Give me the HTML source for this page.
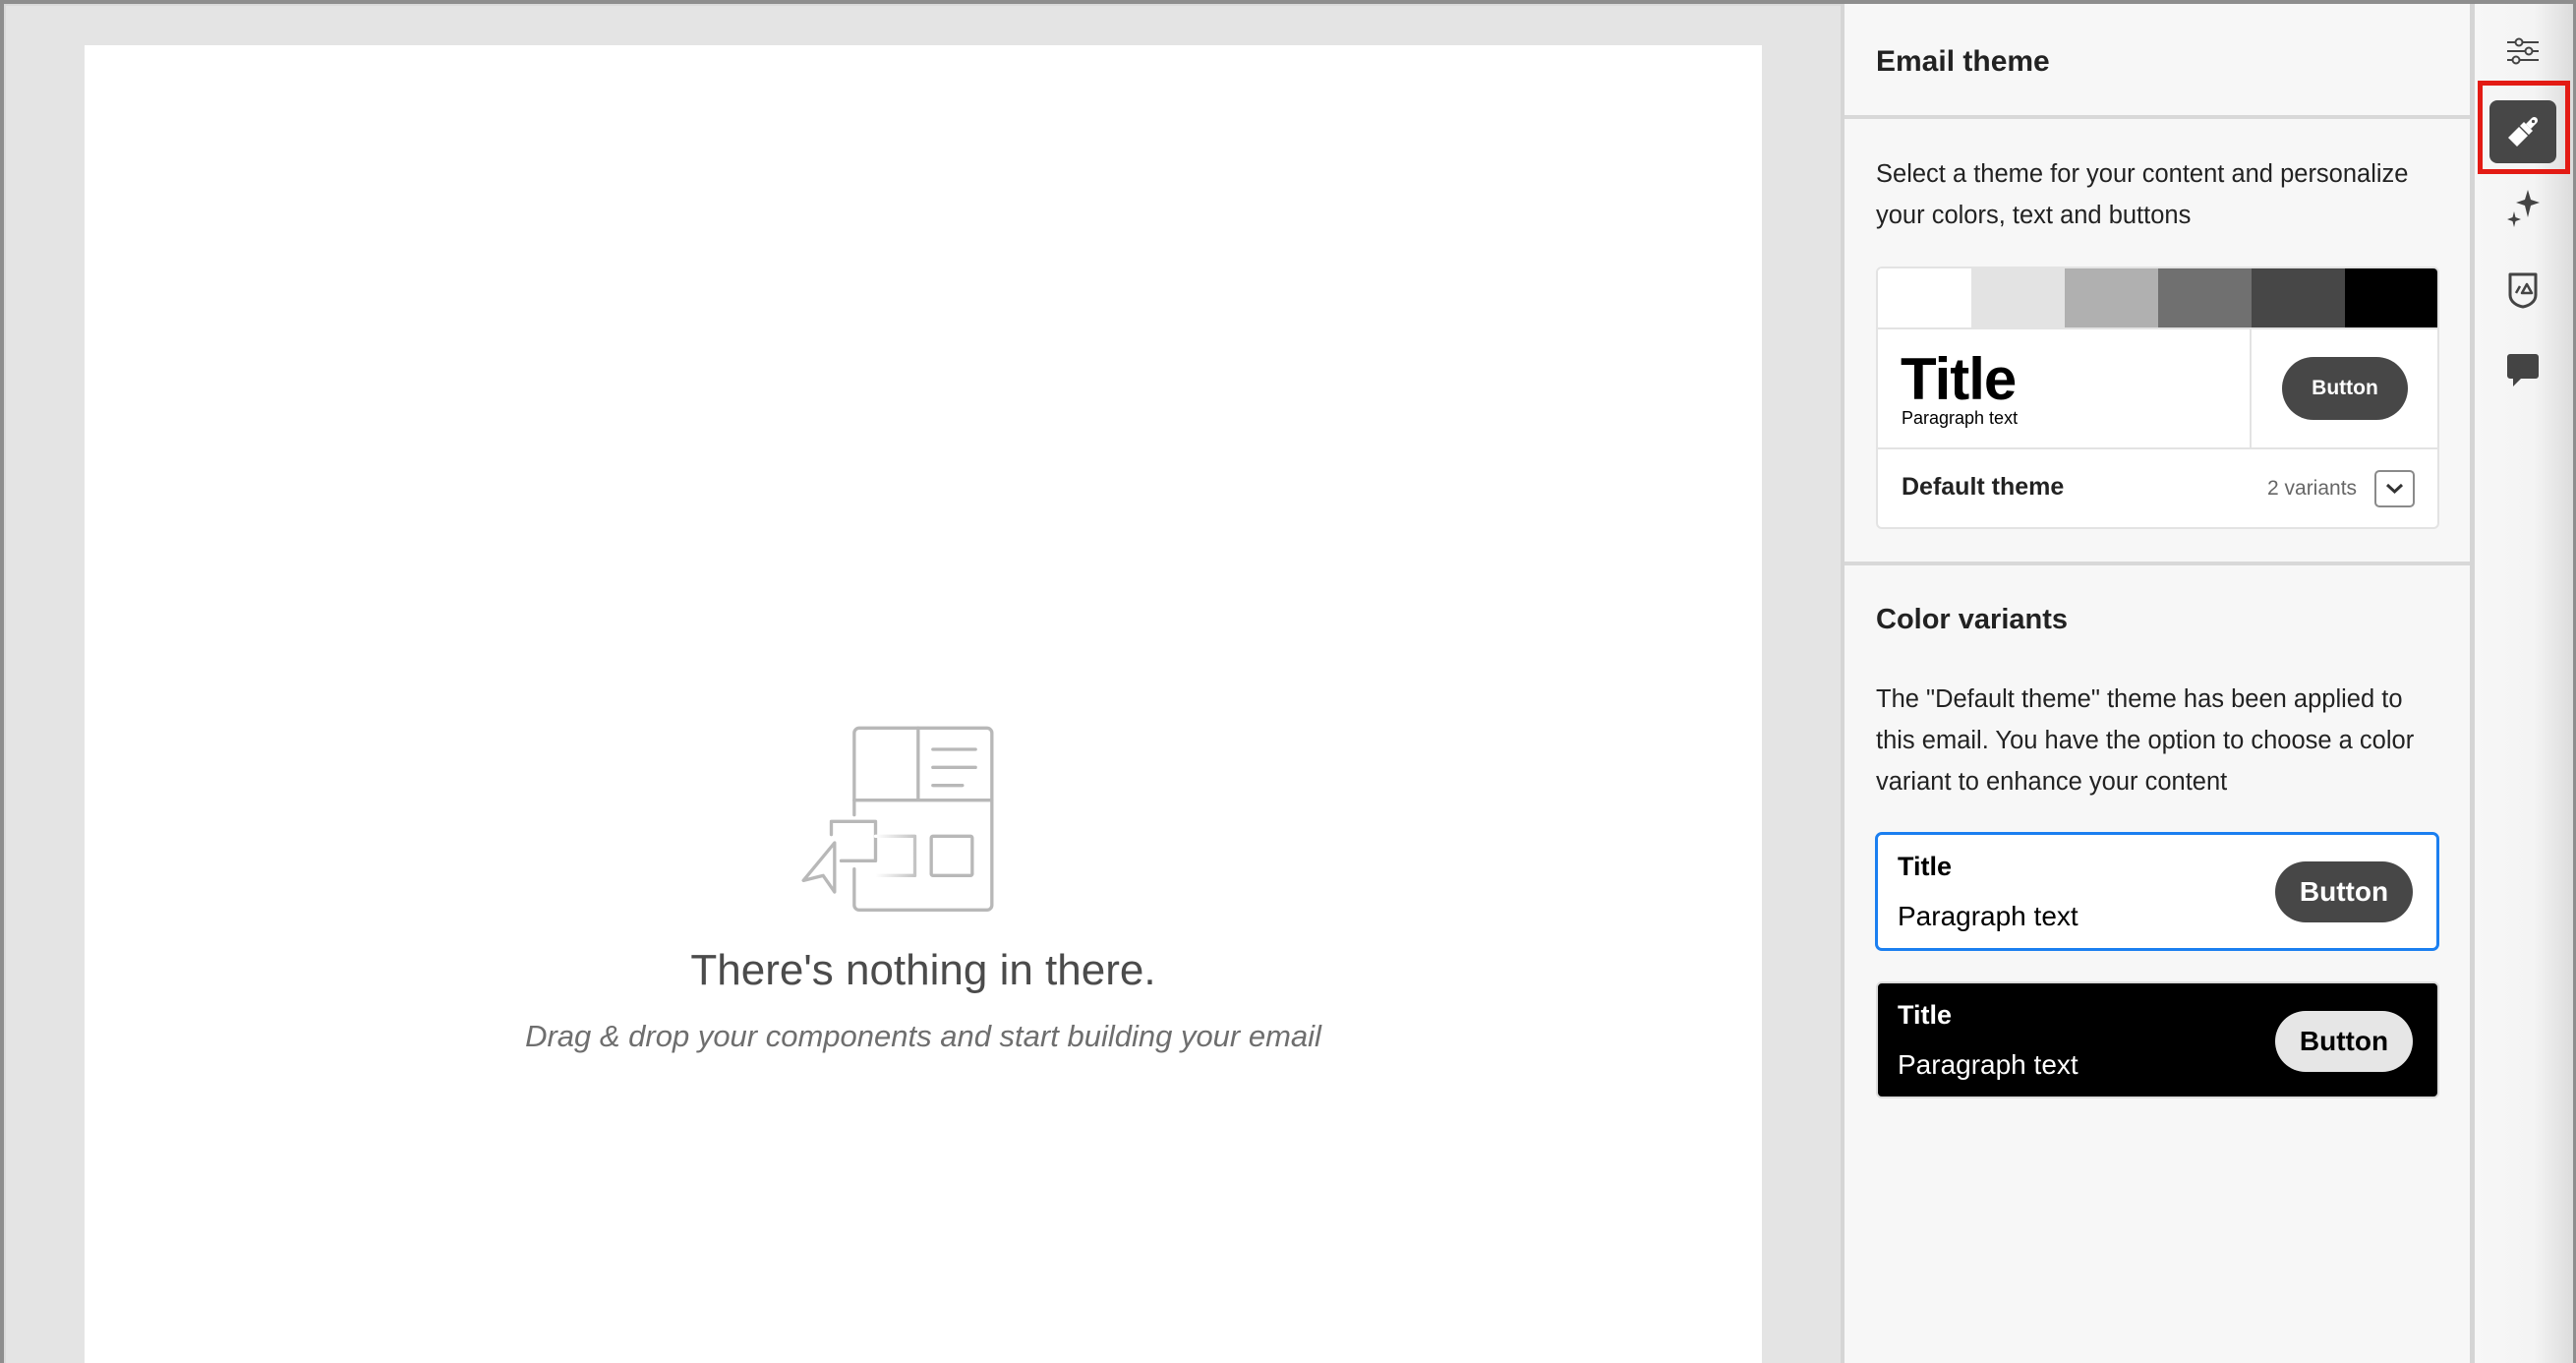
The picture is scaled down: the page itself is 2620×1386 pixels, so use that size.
<!DOCTYPE html>
<html><head><meta charset="utf-8"><style>
*{margin:0;padding:0;box-sizing:border-box}
body{width:2620px;height:1386px;overflow:hidden;position:relative;background:#e4e4e4;font-family:"Liberation Sans",sans-serif;}
.a{position:absolute}
.t{position:absolute;white-space:nowrap}
</style></head><body>
<div class="a" style="left:0;top:0;width:2620px;height:4px;background:#8e8e8e"></div>
<div class="a" style="left:0;top:0;width:4px;height:1386px;background:#8e8e8e"></div>
<div class="a" style="left:2617px;top:0;width:3px;height:1386px;background:#8e8e8e"></div>
<div class="a" style="left:4px;top:4px;width:2px;height:1382px;background:#dadada"></div>
<div class="a" style="left:4px;top:4px;width:1868px;height:2px;background:#dadada"></div>
<div class="a" style="left:86px;top:46px;width:1706px;height:1340px;background:#fff"></div>
<svg class="a" style="left:802px;top:732px" width="217" height="200" viewBox="480 438 130 120">
<defs><linearGradient id="g" x1="0" x2="1"><stop offset="0" stop-color="#fff"/><stop offset="1" stop-color="#c4c4c4"/></linearGradient></defs>
<g fill="none" stroke="#b8b8b8" stroke-width="2" stroke-linecap="round" stroke-linejoin="round">
<path d="M520 496 V446 a3 3 0 0 1 3-3 H601 a3 3 0 0 1 3 3 V551 a3 3 0 0 1-3 3 H523 a3 3 0 0 1-3-3 V529"/>
<path d="M559 443 V487 M520 487 H604"/>
<path d="M568 456 H594 M568 467 H594 M568 478 H586"/>
<path d="M506 508 V500 H533 V524 H512"/>
<rect x="567" y="509" width="25" height="24" rx="1"/>
<path d="M533 509 H557 V533 H533" stroke="url(#g)"/>
<path d="M508 513 L489 536 L501 533 L508 543 Z"/>
</g></svg>
<div class="t" style="left:0;width:1878px;text-align:center;top:962px;font-size:44px;color:#4b4b4b">There's nothing in there.</div>
<div class="t" style="left:0;width:1878px;text-align:center;top:1036px;font-size:31px;color:#6e6e6e;font-style:italic">Drag &amp; drop your components and start building your email</div>
<div class="a" style="left:1872px;top:4px;width:4px;height:1382px;background:#d5d5d5"></div>
<div class="a" style="left:1876px;top:4px;width:636px;height:1382px;background:#f7f7f7"></div>
<div class="a" style="left:1876px;top:117px;width:636px;height:4px;background:#d8d8d8"></div>
<div class="a" style="left:1876px;top:571px;width:636px;height:4px;background:#d8d8d8"></div>
<div class="t" style="left:1908px;top:46px;font-size:30px;font-weight:bold;color:#222">Email theme</div>
<div class="t" style="left:1908px;top:156px;font-size:25.5px;line-height:42px;color:#222">Select a theme for your content and personalize<br>your colors, text and buttons</div>
<div class="a" style="left:1908px;top:271px;width:573px;height:267px;border:2px solid #e3e3e3;border-radius:6px;background:#fff;overflow:hidden">
 <div class="a" style="left:0;top:0;width:95px;height:60px;background:#fff"></div>
 <div class="a" style="left:95px;top:0;width:95px;height:60px;background:#e3e3e3"></div>
 <div class="a" style="left:190px;top:0;width:95px;height:60px;background:#b0b0b0"></div>
 <div class="a" style="left:285px;top:0;width:95px;height:60px;background:#707070"></div>
 <div class="a" style="left:380px;top:0;width:95px;height:60px;background:#474747"></div>
 <div class="a" style="left:475px;top:0;width:100px;height:60px;background:#000"></div>
 <div class="a" style="left:0;top:60px;width:573px;height:2px;background:#e3e3e3"></div>
 <div class="a" style="left:378px;top:60px;width:2px;height:122px;background:#e3e3e3"></div>
 <div class="a" style="left:0;top:182px;width:573px;height:2px;background:#e3e3e3"></div>
 <div class="t" style="left:23px;top:78px;font-size:60px;font-weight:bold;color:#000;letter-spacing:-1px">Title</div>
 <div class="t" style="left:24px;top:142px;font-size:18px;color:#000">Paragraph text</div>
 <div class="a" style="left:411px;top:90px;width:128px;height:64px;border-radius:32px;background:#474747;color:#fff;font-weight:bold;font-size:21px;text-align:center;line-height:64px">Button</div>
 <div class="t" style="left:24px;top:208px;font-size:25px;font-weight:bold;color:#222">Default theme</div>
 <div class="t" style="left:396px;top:212px;font-size:21px;color:#666">2 variants</div>
 <div class="a" style="left:505px;top:205px;width:41px;height:38px;border:2px solid #8a8a8a;border-radius:5px"></div>
 <svg class="a" style="left:515px;top:216px" width="21" height="16" viewBox="0 0 21 16"><path d="M3 4 L10.5 11 L18 4" fill="none" stroke="#333" stroke-width="3"/></svg>
</div>
<div class="t" style="left:1908px;top:614px;font-size:29px;font-weight:bold;color:#222">Color variants</div>
<div class="t" style="left:1908px;top:690px;font-size:25.5px;line-height:42px;color:#222">The "Default theme" theme has been applied to<br>this email. You have the option to choose a color<br>variant to enhance your content</div>
<div class="a" style="left:1907px;top:846px;width:574px;height:121px;border:3px solid #1b7ff0;border-radius:7px;background:#fff">
 <div class="t" style="left:20px;top:17px;font-size:27px;font-weight:bold;color:#000">Title</div>
 <div class="t" style="left:20px;top:67px;font-size:28px;color:#000">Paragraph text</div>
 <div class="a" style="left:404px;top:27px;width:140px;height:62px;border-radius:31px;background:#474747;color:#fff;font-weight:bold;font-size:28px;text-align:center;line-height:62px">Button</div>
</div>
<div class="a" style="left:1908px;top:998px;width:573px;height:119px;border:2px solid #ddd;border-radius:6px;background:#000">
 <div class="t" style="left:20px;top:17px;font-size:27px;font-weight:bold;color:#fff">Title</div>
 <div class="t" style="left:20px;top:67px;font-size:28px;color:#fff">Paragraph text</div>
 <div class="a" style="left:404px;top:28px;width:140px;height:62px;border-radius:31px;background:#e6e6e6;color:#000;font-weight:bold;font-size:28px;text-align:center;line-height:62px">Button</div>
</div>
<div class="a" style="left:2512px;top:4px;width:5px;height:1382px;background:#d5d5d5"></div>
<div class="a" style="left:2517px;top:4px;width:100px;height:1382px;background:linear-gradient(to right,#f7f7f7 0%,#f4f4f4 60%,#dcdcdc 100%)"></div>
<svg class="a" style="left:2548px;top:38px" width="36" height="28" viewBox="0 0 36 28"><g fill="none" stroke="#444" stroke-width="2"><path d="M2 5 H10 M18 5 H34 M2 14 H20 M28 14 H34 M2 23 H7 M15 23 H34"/><circle cx="14" cy="5" r="3.5"/><circle cx="24" cy="14" r="3.5"/><circle cx="11" cy="23" r="3.5"/></g></svg>
<div class="a" style="left:2520px;top:82px;width:94px;height:95px;border:5px solid #e31b14"></div>
<div class="a" style="left:2532px;top:102px;width:68px;height:64px;border-radius:8px;background:#474747"></div>
<svg class="a" style="left:2548px;top:116px" width="36" height="36" viewBox="0 0 36 36"><g fill="#fff"><path d="M3 24 L14 13 L23 22 L12 33 Z"/><path d="M15 12 L19 8 L28 17 L24 21 Z"/><path d="M21 10 L27 4 A3 3 0 0 1 32 9 L26 15 Z"/></g><circle cx="28.5" cy="7.5" r="1.6" fill="#474747"/></svg>
<svg class="a" style="left:2549px;top:193px" width="34" height="40" viewBox="0 0 34 40"><g fill="#444"><path d="M22 0 L25 10 L34 13 L25 16 L22 28 L19 16 L10 13 L19 10 Z"/><path d="M8 22 L9.5 28 L15 30 L9.5 32 L8 38 L6.5 32 L1 30 L6.5 28 Z"/></g></svg>
<svg class="a" style="left:2550px;top:276px" width="32" height="38" viewBox="0 0 32 38"><path d="M3 3 H29 V24 C29 31 22 35 16 36 C10 35 3 31 3 24 Z" fill="none" stroke="#444" stroke-width="3" stroke-linejoin="round"/><path d="M9 22 L13 15" stroke="#444" stroke-width="2.5"/><path d="M15 22 L20 13 L25 22 Z" fill="none" stroke="#444" stroke-width="2.5" stroke-linejoin="round"/></svg>
<svg class="a" style="left:2550px;top:360px" width="32" height="40" viewBox="0 0 32 40"><path d="M3 0 H29 A3 3 0 0 1 32 3 V22 A3 3 0 0 1 29 25 H14 L6 33 V25 H3 A3 3 0 0 1 0 22 V3 A3 3 0 0 1 3 0 Z" fill="#444"/></svg>
</body></html>
